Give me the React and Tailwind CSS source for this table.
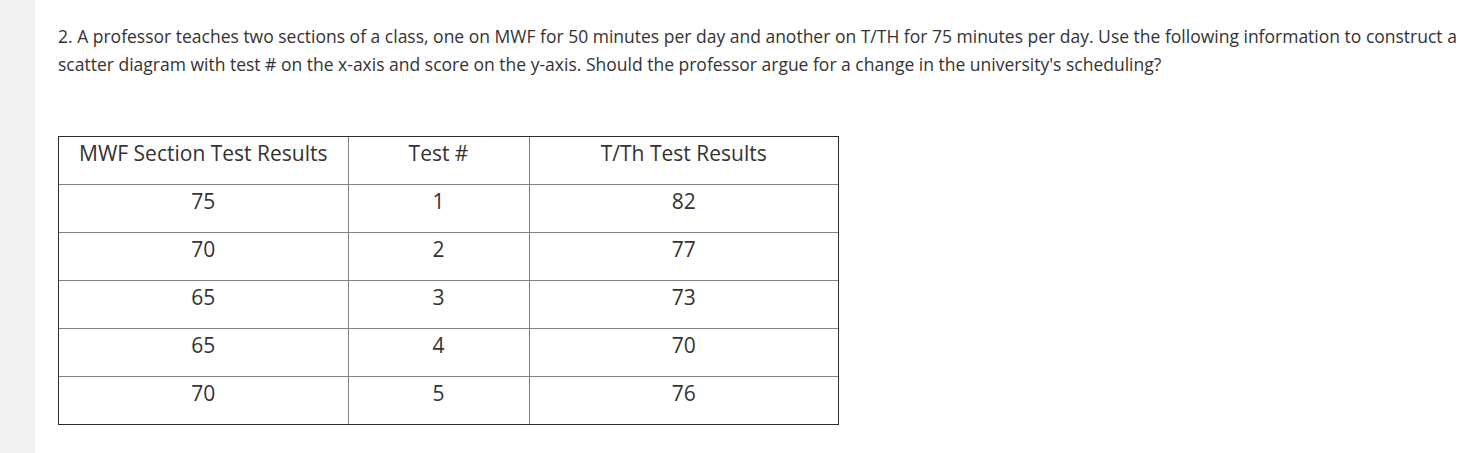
import React from "react";

const rows = [
  ["75", "1", "82"],
  ["70", "2", "77"],
  ["65", "3", "73"],
  ["65", "4", "70"],
  ["70", "5", "76"],
];

export default function App() {
  return (
    <div
      className="flex w-[1464px] h-[453px] bg-white text-[#333333]"
      style={{ fontFamily: '"Open Sans", sans-serif' }}
    >
      <div className="w-[35px] shrink-0 bg-[#f2f2f2] border-r border-[#ececec]" />
      <div className="pl-[23px] pt-[22px]">
        <p className="text-[17.5px] leading-[28px] w-[1410px]">
          2. A professor teaches two sections of a class, one on MWF for 50 minutes per day and another on T/TH for 75 minutes per day. Use the following information to construct a scatter diagram with test # on the x-axis and score on the y-axis. Should the professor argue for a change in the university's scheduling?
        </p>
        <div className="mt-[58px] w-[781px] border border-[#2b2b2b]">
          <table className="w-full border-collapse text-[21px]">
            <thead>
              <tr className="h-[47px]">
                <th className="w-[289px] font-normal align-top pt-[1px] leading-[30px]">MWF Section Test Results</th>
                <th className="w-[181px] border-l border-[#808080] font-normal align-top pt-[1px] leading-[30px]">Test #</th>
                <th className="border-l border-[#808080] font-normal align-top pt-[1px] leading-[30px]">T/Th Test Results</th>
              </tr>
            </thead>
            <tbody>
              {rows.map((r, i) => (
                <tr key={i} className="h-[48px] border-t border-[#808080]">
                  {r.map((c, j) => (
                    <td
                      key={j}
                      className="border-l first:border-l-0 border-[#808080] text-center align-top pt-[1px] leading-[30px]"
                    >
                      {c}
                    </td>
                  ))}
                </tr>
              ))}
            </tbody>
          </table>
        </div>
      </div>
    </div>
  );
}
